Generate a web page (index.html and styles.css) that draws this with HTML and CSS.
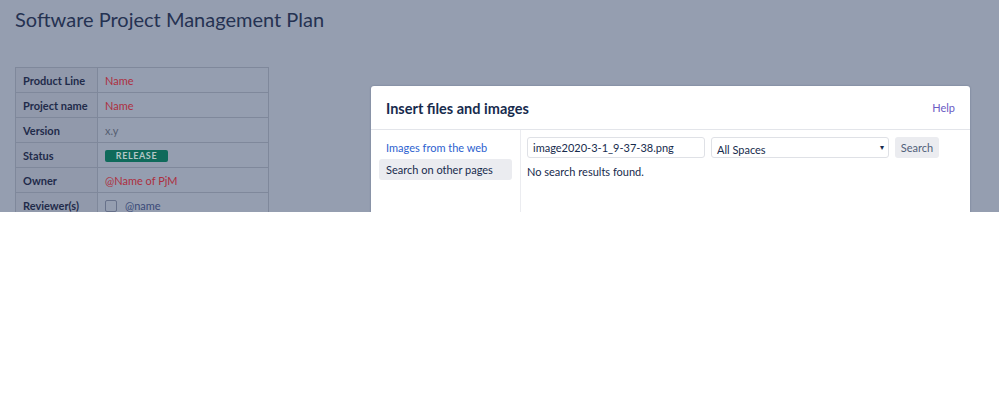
FILE: index.html
```html
<!DOCTYPE html>
<html lang="en">
<head>
    <meta charset="UTF-8">
    <title>Software Project Management Plan</title>
    <link rel="stylesheet" href="styles.css">
</head>
<body>
    <div class="page">
        <h1 class="page-title">Software Project Management Plan</h1>

        <table class="info-table">
            <tr><th>Product Line</th><td class="red">Name</td></tr>
            <tr><th>Project name</th><td class="red">Name</td></tr>
            <tr><th>Version</th><td class="grey">x.y</td></tr>
            <tr><th>Status</th><td><span class="lozenge">RELEASE</span></td></tr>
            <tr><th>Owner</th><td class="red">@Name of PjM</td></tr>
            <tr><th>Reviewer(s)</th><td><span class="checkbox"></span><span class="mention">@name</span></td></tr>
        </table>

        <!-- dialog over the dimmed page -->
        <div class="dialog">
            <div class="dialog-header">
                <h2>Insert files and images</h2>
                <a class="help-link" href="#">Help</a>
            </div>
            <div class="dialog-body">
                <div class="dialog-nav">
                    <a class="nav-item link" href="#">Images from the web</a>
                    <div class="nav-item selected">Search on other pages</div>
                </div>
                <div class="dialog-main">
                    <div class="search-row">
                        <input class="search-input" type="text" value="image2020-3-1_9-37-38.png">
                        <div class="space-select">All Spaces<span class="arrow">&#9662;</span></div>
                        <button class="search-btn">Search</button>
                    </div>
                    <p class="no-results">No search results found.</p>
                </div>
            </div>
        </div>
    </div>
</body>
</html>
```

FILE: styles.css
```css
body {
    margin: 0;
    background-color: white;
    font-family: Lato, "Open Sans", sans-serif;
}

.page {
    position: relative;
    height: 212px;
    overflow: hidden;
    background-color: #959eb0;
    padding: 0 15px;
}

.page-title {
    margin: 0;
    padding-top: 7px;
    font-size: 20px;
    font-weight: 400;
    color: #253252;
}

.info-table {
    margin-top: 36px;
    border-collapse: collapse;
    font-size: 11px;
}

.info-table th,
.info-table td {
    border: 1px solid #7f889b;
    height: 24px;
    padding: 0 7px;
    text-align: left;
    white-space: nowrap;
}

.info-table th {
    width: 67px;
    color: #1f2b4a;
    font-weight: 700;
    background-color: #9199ab;
}

.info-table td {
    width: 156px;
}

.red {
    color: #ad2f40;
}

.grey {
    color: #545d70;
}

.lozenge {
    display: inline-block;
    width: 63px;
    height: 12px;
    line-height: 12px;
    border-radius: 2px;
    background-color: #0f6a5b;
    color: #b3c6c6;
    font-size: 9px;
    font-weight: 700;
    text-align: center;
    letter-spacing: 0.6px;
}

.checkbox {
    display: inline-block;
    width: 10px;
    height: 10px;
    border: 1px solid #67718a;
    border-radius: 2px;
    vertical-align: -2px;
    margin-right: 8px;
}

.mention {
    color: #3a4a78;
}

.dialog {
    position: absolute;
    left: 371px;
    top: 86px;
    width: 599px;
    height: 200px;
    background-color: white;
    border-radius: 3px;
    box-shadow: 0 0 2px rgba(9, 30, 66, 0.3);
}

.dialog-header {
    display: flex;
    justify-content: space-between;
    align-items: center;
    height: 43px;
    padding: 0 15px;
    border-bottom: 1px solid #e3e5ea;
}

.dialog-header h2 {
    margin: 0;
    padding-top: 1px;
    font-size: 14.5px;
    font-weight: 700;
    color: #172b4d;
}

.help-link {
    color: #6a5bc4;
    font-size: 11px;
    text-decoration: none;
}

.dialog-body {
    display: flex;
    height: 156px;
}

.dialog-nav {
    width: 150px;
    border-right: 1px solid #ebecf0;
    padding: 7px 8px 0;
    box-sizing: border-box;
}

.nav-item {
    display: block;
    height: 21px;
    line-height: 21px;
    padding: 0 7px;
    font-size: 11px;
    border-radius: 3px;
    text-decoration: none;
}

.nav-item.link {
    color: #2d5fcf;
    margin-bottom: 1px;
}

.nav-item.selected {
    background-color: #ebecf0;
    color: #172b4d;
}

.dialog-main {
    padding: 7px 6px;
}

.search-row {
    display: flex;
    gap: 6px;
}

.search-input,
.space-select {
    box-sizing: border-box;
    width: 178px;
    height: 21px;
    border: 1px solid #dfe1e6;
    border-radius: 3px;
    padding: 0 5px;
    font-family: inherit;
    font-size: 11px;
    color: #172b4d;
}

.space-select {
    position: relative;
    line-height: 21px;
    padding-top: 1px;
}

.arrow {
    position: absolute;
    right: 4px;
    top: -1px;
    font-size: 8px;
    color: #172b4d;
}

.search-btn {
    height: 21px;
    width: 44px;
    padding: 0;
    border: none;
    border-radius: 3px;
    background-color: #ebecf0;
    color: #505f79;
    font-family: inherit;
    font-size: 11px;
}

.no-results {
    margin: 7px 0 0;
    font-size: 11px;
    color: #172b4d;
}
```
